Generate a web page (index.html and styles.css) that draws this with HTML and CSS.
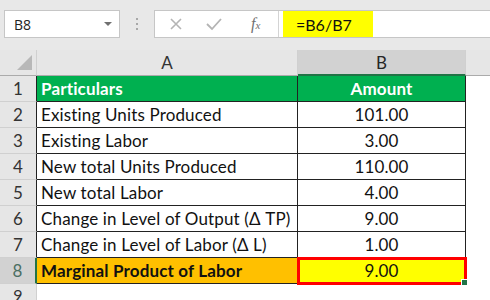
FILE: index.html
```html
<!DOCTYPE html>
<html lang="en">
<head>
  <meta charset="UTF-8" />
  <title>Marginal Product of Labor</title>
  <link rel="stylesheet" href="styles.css">
</head>
<body>
<div class="bar">
  <div class="namebox">
    <span>B8</span>
    <span class="drop"></span>
  </div>
  <div class="dots"><i></i><i></i><i></i></div>
  <div class="formula">
    <svg class="ico" width="16" height="16" viewBox="0 0 16 16"><path d="M3 3 L13 13 M13 3 L3 13" stroke="#b4b4b4" stroke-width="1.6" fill="none"/></svg>
    <svg class="ico" width="18" height="16" viewBox="0 0 18 16"><path d="M2 8 L7 13 L16 3" stroke="#b4b4b4" stroke-width="1.8" fill="none"/></svg>
    <span class="fx">f<small>x</small></span>
    <div class="input"><span class="hl">=B6/B7</span></div>
  </div>
</div>

<div class="sheet">
  <div class="corner"><span class="tri"></span></div>
  <div class="colh">A</div>
  <div class="colh sel">B</div>
  <div class="colh rest"></div>

  <div class="rowh">1</div>
  <div class="cell head">Particulars</div>
  <div class="cell head num">Amount</div>
  <div class="blank"></div>

  <div class="rowh">2</div>
  <div class="cell">Existing Units Produced</div>
  <div class="cell num">101.00</div>
  <div class="blank"></div>

  <div class="rowh">3</div>
  <div class="cell">Existing Labor</div>
  <div class="cell num">3.00</div>
  <div class="blank"></div>

  <div class="rowh">4</div>
  <div class="cell">New total Units Produced</div>
  <div class="cell num">110.00</div>
  <div class="blank"></div>

  <div class="rowh">5</div>
  <div class="cell">New total Labor</div>
  <div class="cell num">4.00</div>
  <div class="blank"></div>

  <div class="rowh">6</div>
  <div class="cell">Change in Level of Output (Δ TP)</div>
  <div class="cell num">9.00</div>
  <div class="blank"></div>

  <div class="rowh">7</div>
  <div class="cell">Change in Level of Labor (Δ L)</div>
  <div class="cell num">1.00</div>
  <div class="blank"></div>

  <div class="rowh sel">8</div>
  <div class="cell total">Marginal Product of Labor</div>
  <div class="cell num result">9.00<span class="handle"></span></div>
  <div class="blank"></div>

  <div class="rowh last">9</div>
  <div class="blank"></div>
  <div class="blank"></div>
  <div class="blank"></div>
</div>
</body>
</html>
```

FILE: styles.css
```css
body {
  margin: 0;
  width: 490px;
  height: 300px;
  overflow: hidden;
  background: #fff;
  font-family: Lato, "Liberation Sans", sans-serif;
}
.bar {
  height: 50px;
  background: #e8e8e8;
  display: flex;
  align-items: flex-start;
  padding-top: 10px;
  box-sizing: border-box;
}
.namebox {
  margin-left: 4px;
  width: 116px;
  height: 28px;
  box-sizing: border-box;
  background: #fff;
  border: 1px solid #c6c6c6;
  display: flex;
  align-items: center;
  justify-content: space-between;
  padding: 0 7px 0 9px;
  font-family: "Open Sans", sans-serif;
  font-size: 14px;
  color: #222;
}
.drop {
  width: 0;
  height: 0;
  border-left: 4px solid transparent;
  border-right: 4px solid transparent;
  border-top: 4px solid #707070;
}
.dots {
  width: 34px;
  height: 28px;
  display: flex;
  flex-direction: column;
  align-items: center;
  justify-content: center;
  gap: 3px;
}
.dots i {
  width: 2px;
  height: 2px;
  background: #a8a8a8;
}
.formula {
  flex: 1;
  height: 28px;
  box-sizing: border-box;
  background: #fff;
  border: 1px solid #c6c6c6;
  border-right: none;
  display: flex;
  align-items: center;
  padding-left: 13px;
}
.ico {
  margin-right: 21px;
}
.fx {
  font-family: "Liberation Serif", serif;
  font-style: italic;
  font-size: 16px;
  color: #707070;
  margin-left: 7px;
  width: 27px;
}
.fx small {
  font-size: 11px;
}
.input {
  align-self: stretch;
  flex: 1;
  border-left: 1px solid #d4d4d4;
  padding-left: 4px;
  display: flex;
}
.hl {
  background: #ffff00;
  width: 90px;
  box-sizing: border-box;
  padding-left: 13px;
  display: flex;
  align-items: center;
  font-family: Lato, sans-serif;
  font-size: 16px;
  color: #111;
}
.sheet {
  display: grid;
  grid-template-columns: 37px 261px 168px 1fr;
  grid-template-rows: 26px repeat(9, 26px);
}
.corner, .colh, .rowh {
  background: #e6e6e6;
  box-sizing: border-box;
  color: #333;
  font-size: 17px;
  display: flex;
  align-items: center;
  justify-content: center;
}
.corner {
  border-bottom: 1px solid #ababab;
  border-right: 1px solid #d0d0d0;
  position: relative;
}
.tri {
  position: absolute;
  right: 4px;
  bottom: 5px;
  width: 0;
  height: 0;
  border-left: 15px solid transparent;
  border-bottom: 15px solid #b8b8b8;
}
.colh {
  border-bottom: 1px solid #ababab;
  border-right: 1px solid #d0d0d0;
}
.colh.sel {
  background: #d2d2d2;
  border-bottom: 2px solid #217346;
  color: #262626;
}
.colh.rest {
  border-right: none;
}
.rowh {
  border-bottom: 1px solid #d0d0d0;
  border-right: 1px solid #222;
}
.rowh.sel {
  background: #d2d2d2;
  color: #4b6f63;
  border-right: 2px solid #217346;
}
.rowh.last {
  border-right: 1px solid #d0d0d0;
  align-items: flex-start;
  padding-top: 1px;
  font-size: 16px;
}
.cell {
  box-sizing: border-box;
  border-right: 1px solid #222;
  border-bottom: 1px solid #222;
  padding-left: 4px;
  display: flex;
  align-items: center;
  font-size: 17px;
  letter-spacing: 0.15px;
  color: #111;
  white-space: nowrap;
  overflow: hidden;
}
.cell.num {
  justify-content: center;
  padding-left: 0;
}
.cell.head {
  background: #00b050;
  color: #fff;
  font-weight: bold;
}
.cell.total {
  background: #ffc000;
  font-weight: bold;
}
.cell.result {
  background: #ffff00;
  position: relative;
  overflow: visible;
  outline: 3px solid #ff0000;
  outline-offset: -2px;
}
.handle {
  position: absolute;
  right: -3px;
  bottom: -3px;
  width: 5px;
  height: 5px;
  background: #217346;
  border: 1px solid #fff;
}
.blank {
  background: #fff;
}
```
